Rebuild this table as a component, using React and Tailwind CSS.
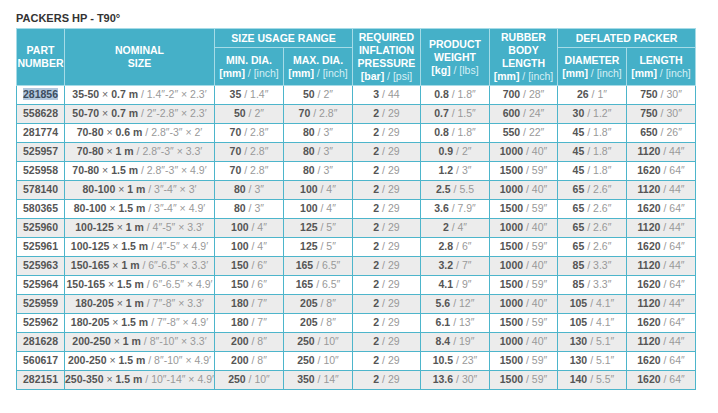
const ROWS = [
	['281856', '35-50 × 0.7 m', '1.4″-2″ × 2.3′', ['35', '1.4″'], ['50', '2″'], ['3', '44'], ['0.8', '1.8″'], ['700', '28″'], ['26', '1″'], ['750', '30″']],
	['558628', '50-70 × 0.7 m', '2″-2.8″ × 2.3′', ['50', '2″'], ['70', '2.8″'], ['2', '29'], ['0.7', '1.5″'], ['600', '24″'], ['30', '1.2″'], ['750', '30″']],
	['281774', '70-80 × 0.6 m', '2.8″-3″ × 2′', ['70', '2.8″'], ['80', '3″'], ['2', '29'], ['0.8', '1.8″'], ['550', '22″'], ['45', '1.8″'], ['650', '26″']],
	['525957', '70-80 × 1 m', '2.8″-3″ × 3.3′', ['70', '2.8″'], ['80', '3″'], ['2', '29'], ['0.9', '2″'], ['1000', '40″'], ['45', '1.8″'], ['1120', '44″']],
	['525958', '70-80 × 1.5 m', '2.8″-3″ × 4.9′', ['70', '2.8″'], ['80', '3″'], ['2', '29'], ['1.2', '3″'], ['1500', '59″'], ['45', '1.8″'], ['1620', '64″']],
	['578140', '80-100 × 1 m', '3″-4″ × 3′', ['80', '3″'], ['100', '4″'], ['2', '29'], ['2.5', '5.5'], ['1000', '40″'], ['65', '2.6″'], ['1120', '44″']],
	['580365', '80-100 × 1.5 m', '3″-4″ × 4.9′', ['80', '3″'], ['100', '4″'], ['2', '29'], ['3.6', '7.9″'], ['1500', '59″'], ['65', '2.6″'], ['1620', '64″']],
	['525960', '100-125 × 1 m', '4″-5″ × 3.3′', ['100', '4″'], ['125', '5″'], ['2', '29'], ['2', '4″'], ['1000', '40″'], ['65', '2.6″'], ['1120', '44″']],
	['525961', '100-125 × 1.5 m', '4″-5″ × 4.9′', ['100', '4″'], ['125', '5″'], ['2', '29'], ['2.8', '6″'], ['1500', '59″'], ['65', '2.6″'], ['1620', '64″']],
	['525963', '150-165 × 1 m', '6″-6.5″ × 3.3′', ['150', '6″'], ['165', '6.5″'], ['2', '29'], ['3.2', '7″'], ['1000', '40″'], ['85', '3.3″'], ['1120', '44″']],
	['525964', '150-165 × 1.5 m', '6″-6.5″ × 4.9′', ['150', '6″'], ['165', '6.5″'], ['2', '29'], ['4.1', '9″'], ['1500', '59″'], ['85', '3.3″'], ['1620', '64″']],
	['525959', '180-205 × 1 m', '7″-8″ × 3.3′', ['180', '7″'], ['205', '8″'], ['2', '29'], ['5.6', '12″'], ['1000', '40″'], ['105', '4.1″'], ['1120', '44″']],
	['525962', '180-205 × 1.5 m', '7″-8″ × 4.9′', ['180', '7″'], ['205', '8″'], ['2', '29'], ['6.1', '13″'], ['1500', '59″'], ['105', '4.1″'], ['1620', '64″']],
	['281628', '200-250 × 1 m', '8″-10″ × 3.3′', ['200', '8″'], ['250', '10″'], ['2', '29'], ['8.4', '19″'], ['1000', '40″'], ['130', '5.1″'], ['1120', '44″']],
	['560617', '200-250 × 1.5 m', '8″-10″ × 4.9′', ['200', '8″'], ['250', '10″'], ['2', '29'], ['10.5', '23″'], ['1500', '59″'], ['130', '5.1″'], ['1620', '64″']],
	['282151', '250-350 × 1.5 m', '10″-14″ × 4.9′', ['250', '10″'], ['350', '14″'], ['2', '29'], ['13.6', '30″'], ['1500', '59″'], ['140', '5.5″'], ['1620', '64″']],
];

// split "35-50 × 0.7 m" so the numbers are bold and the × stays lighter
function Nominal({ metric, inch }) {
	const [range, rest] = metric.split(' × ');
	return (
		<>
			<b className="font-bold text-[#555]">{range}</b>
			<span className="text-[#666]"> × </span>
			<b className="font-bold text-[#555]">{rest}</b>
			<span className="text-[#999]"> / {inch}</span>
		</>
	);
}

function Pair({ value }) {
	return (
		<>
			<b className="font-bold text-[#555]">{value[0]}</b>
			<span className="text-[#999]"> / {value[1]}</span>
		</>
	);
}

function Unit({ a, b }) {
	return (
		<div className="whitespace-nowrap">
			<span className="font-bold">[{a}]</span>
			<span className="font-normal text-[#d6eff5]"> / [{b}]</span>
		</div>
	);
}

const th = 'border border-[#a6dbe7] bg-[#45b0c8] text-white font-bold text-center align-middle leading-[13px] p-0';
const td = 'border border-[#4db5cb] text-center align-middle p-0 whitespace-nowrap';

export default function App() {
	return (
		<div className="w-[718px] h-[413px] bg-white pt-[11px] pl-[16px] font-['Liberation_Sans',Arial,sans-serif]">
			<h1 className="text-[11px] font-bold text-[#333] leading-[14px] mb-[3px]">PACKERS HP - T90°</h1>
			<table className="border-collapse table-fixed w-[679px] border border-[#45b0c8] text-[10.5px]">
				<colgroup>
					<col className="w-[48px]" />
					<col className="w-[150px]" />
					<col className="w-[69px]" />
					<col className="w-[69px]" />
					<col className="w-[68px]" />
					<col className="w-[69px]" />
					<col className="w-[68px]" />
					<col className="w-[69px]" />
					<col className="w-[69px]" />
				</colgroup>
				<thead>
					<tr className="h-[19px]">
						<th rowSpan={2} className={th}>PART<br />NUMBER</th>
						<th rowSpan={2} className={th}>NOMINAL<br />SIZE</th>
						<th colSpan={2} className={th}>SIZE USAGE RANGE</th>
						<th rowSpan={2} className={th}>
							REQUIRED<br />INFLATION<br />PRESSURE
							<Unit a="bar" b="psi" />
						</th>
						<th rowSpan={2} className={th}>
							PRODUCT<br />WEIGHT
							<Unit a="kg" b="lbs" />
						</th>
						<th rowSpan={2} className={th}>
							RUBBER<br />BODY<br />LENGTH
							<Unit a="mm" b="inch" />
						</th>
						<th colSpan={2} className={th}>DEFLATED PACKER</th>
					</tr>
					<tr className="h-[38px]">
						<th className={th}>MIN. DIA.<Unit a="mm" b="inch" /></th>
						<th className={th}>MAX. DIA.<Unit a="mm" b="inch" /></th>
						<th className={th}>DIAMETER<Unit a="mm" b="inch" /></th>
						<th className={th}>LENGTH<Unit a="mm" b="inch" /></th>
					</tr>
				</thead>
				<tbody>
					{ROWS.map((row, i) => (
						<tr key={row[0]} className={`h-[19px] ${i % 2 ? 'bg-[#ececec]' : 'bg-white'}`}>
							<td className={`${td} font-bold text-[#555]`}>
								{i === 0 ? (
									<span className="bg-[#b3c8de] text-[#3d4d5e]">{row[0]}</span>
								) : (
									row[0]
								)}
							</td>
							<td className={td}>
								<Nominal metric={row[1]} inch={row[2]} />
							</td>
							{row.slice(3).map((v, j) => (
								<td key={j} className={td}>
									<Pair value={v} />
								</td>
							))}
						</tr>
					))}
				</tbody>
			</table>
		</div>
	);
}
